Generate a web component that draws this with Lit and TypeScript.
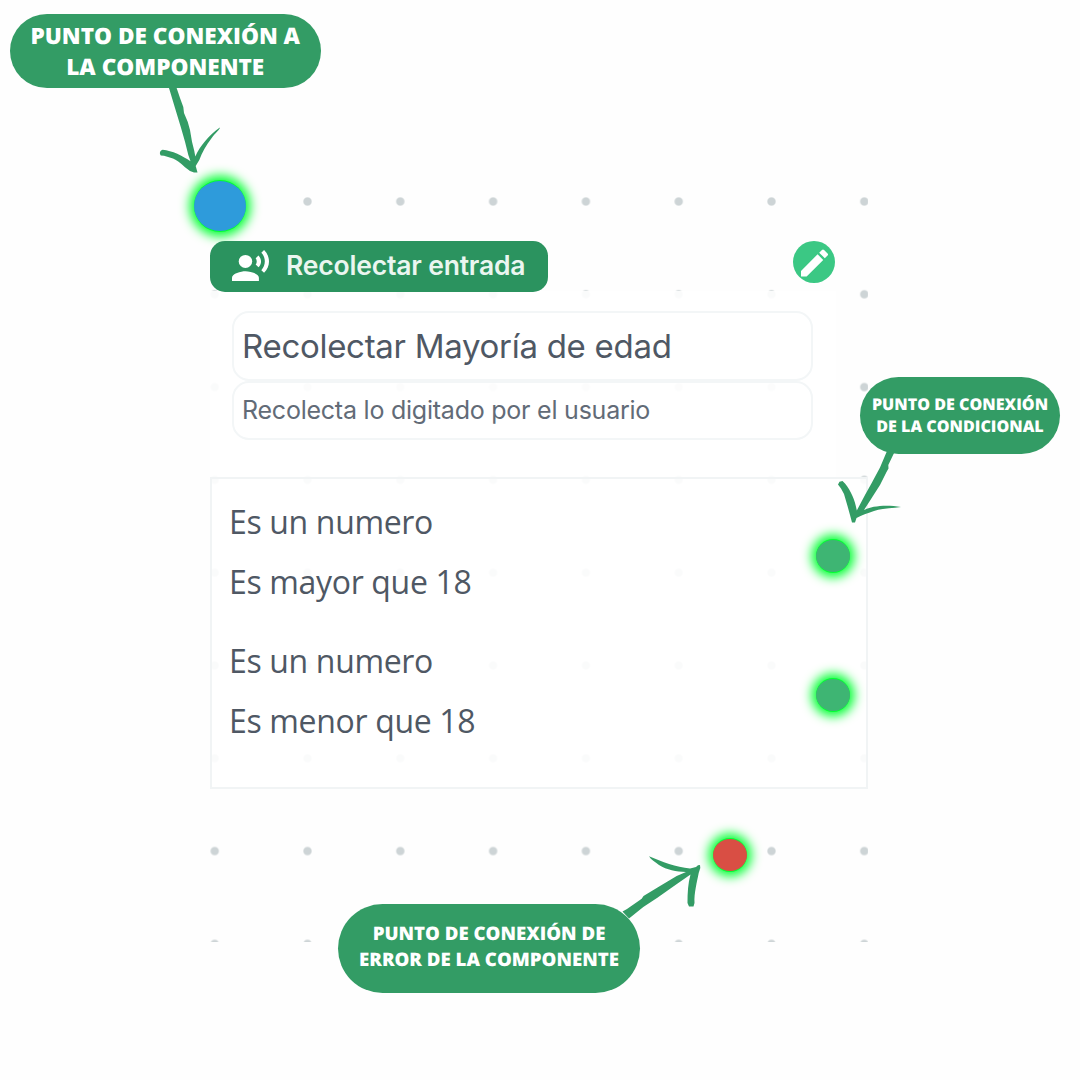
import { LitElement, html, css, svg } from "lit";
import { customElement, property } from "lit/decorators.js";

@customElement("flow-port")
class FlowPort extends LitElement {
  @property({ reflect: true }) kind = "condition";

  static styles = css`
    :host { display: block; position: relative; width: 34px; height: 32px; }
    .glow {
      position: absolute;
      left: 50%;
      top: 50%;
      width: 34px;
      height: 34px;
      margin: -17px 0 0 -17px;
      border-radius: 50%;
      background: #00ff32;
      box-shadow: 0 0 11px 4.5px #00ff32;
    }
    .core {
      position: absolute;
      inset: 0;
      border-radius: 50%;
      background: #3eb573;
    }
    :host([kind="error"]) .core { background: #d94e44; }
    :host([kind="input"]) { width: 52px; height: 50px; }
    :host([kind="input"]) .core { background: #2e9bdb; }
    :host([kind="input"]) .glow {
      width: 52px;
      height: 52px;
      margin: -26px 0 0 -26px;
    }
  `;

  render() {
    return html`<div class="glow"></div><div class="core"></div>`;
  }
}

@customElement("flow-node")
class FlowNode extends LitElement {
  static styles = css`
    :host { display: block; width: 658px; font-family: "Inter", "Liberation Sans", sans-serif; color: #4f5864; }
    .head { display: flex; justify-content: space-between; align-items: flex-start; height: 50px; padding-right: 33px; }
    .tag {
      display: flex;
      align-items: center;
      box-sizing: border-box;
      width: 338px;
      height: 51px;
      padding-left: 22px;
      gap: 17px;
      border-radius: 15px;
      background: #2b935f;
      color: #eaf6f0;
      font-size: 26.5px;
      font-weight: 600;
      line-height: 50px;
      letter-spacing: -0.18px;
      white-space: nowrap;
    }
    .voice { display: block; width: 37px; height: 31px; margin-top: -3px; fill: #fff; }
    .tag span { margin-top: -3px; }
    .edit {
      display: flex;
      align-items: center;
      justify-content: center;
      width: 42px;
      height: 42px;
      border-radius: 50%;
      background: #3bc884;
    }
    .pencil { display: block; width: 37px; height: 36px; margin-top: 2px; fill: #fff; }
    .info { box-sizing: border-box; width: 626px; height: 186px; padding: 20px 0 0 22px; background: rgba(255, 255, 255, 0.9); }
    .field {
      box-sizing: border-box;
      width: 581px;
      padding-left: 8px;
      border: 2px solid #f3f6f7;
      border-radius: 17px;
      background: rgba(255, 255, 255, 0.4);
      white-space: nowrap;
    }
    .title { height: 70px; background: #fff; font-size: 33px; line-height: 67px; letter-spacing: -0.29px; }
    .desc { height: 59px; font-size: 25px; line-height: 54.5px; letter-spacing: -0.23px; color: #626b77; }
    .rules {
      box-sizing: border-box;
      display: flex;
      flex-direction: column;
      gap: 19px;
      height: 312px;
      padding: 13px 16px 0 17px;
      border: 2px solid #f1f4f5;
      background: rgba(255, 255, 255, 0.9);
      font-family: "Open Sans", "Noto Sans", sans-serif;
      font-size: 32px;
      line-height: 60px;
      letter-spacing: -0.34px;
    }
    .rule { display: flex; justify-content: space-between; align-items: center; }
    .rule flow-port { margin-top: 7px; }
  `;

  private rules = [
    ["Es un numero", "Es mayor que 18"],
    ["Es un numero", "Es menor que 18"],
  ];

  render() {
    return html`
      <div class="head">
        <div class="tag">
          <svg class="voice" viewBox="1 2 22 19" preserveAspectRatio="none">
            <circle cx="9" cy="9" r="4" />
            <path d="M9 15c-2.67 0-8 1.34-8 4v2h16v-2c0-2.66-5.33-4-8-4zM16.76 5.36l-1.68 1.69c.84 1.18.84 2.71 0 3.89l1.68 1.69c2.02-2.02 2.02-5.07 0-7.27zM20.07 2l-1.63 1.63c2.77 3.02 2.77 7.56 0 10.74L20.07 16c3.9-3.89 3.91-9.95 0-14z" />
          </svg>
          <span>Recolectar entrada</span>
        </div>
        <div class="edit">
          <svg class="pencil" viewBox="0 0 24 24">
            <path d="M3 17.25V21h3.75L17.81 9.94l-3.75-3.75zM20.71 7.04a1 1 0 0 0 0-1.41l-2.34-2.34a1 1 0 0 0-1.41 0l-1.83 1.83 3.75 3.75z" />
          </svg>
        </div>
      </div>
      <div class="info">
        <div class="field title">Recolectar Mayoría de edad</div>
        <div class="field desc">Recolecta lo digitado por el usuario</div>
      </div>
      <div class="rules">
        ${this.rules.map(
          (lines) => html`<div class="rule">
            <div>${lines.map((l) => html`<div>${l}</div>`)}</div>
            <flow-port kind="condition"></flow-port>
          </div>`
        )}
      </div>
    `;
  }
}

@customElement("app-root")
class AppRoot extends LitElement {
  static styles = css`
    :host { display: block; position: relative; width: 1080px; height: 1080px; overflow: hidden; background: #fefefe; }
    .dots {
      position: absolute;
      left: 210px;
      top: 190px;
      width: 658px;
      height: 752px;
      background-image: radial-gradient(circle at center, #cdd4d6 3.5px, rgba(205, 212, 214, 0) 4.8px);
      background-size: 92.8px 92.8px;
      background-position: -41.7px -34.9px;
    }
    .node { position: absolute; left: 210px; top: 241px; }
    .in { position: absolute; left: 193.5px; top: 181px; }
    .err { position: absolute; left: 713px; top: 839px; }
    .arrows { position: absolute; inset: 0; width: 1080px; height: 1080px; fill: #339c65; }
    .note {
      position: absolute;
      display: flex;
      align-items: center;
      justify-content: center;
      box-sizing: border-box;
      background: #339c65;
      color: #fff;
      font-family: "Open Sans", "Noto Sans", sans-serif;
      font-weight: 800;
      text-align: center;
      text-rendering: geometricPrecision;
      white-space: nowrap;
    }
    .n-input { left: 10px; top: 13.5px; width: 310.5px; height: 74.5px; border-radius: 37.3px; font-size: 22.6px; line-height: 31px; }
    .n-cond { left: 860px; top: 376.5px; width: 200px; height: 77.5px; border-radius: 38.8px; font-size: 16.1px; line-height: 22px; }
    .n-error { left: 338px; top: 903.7px; width: 302px; height: 89px; padding-bottom: 2px; border-radius: 44.5px; font-size: 18.65px; line-height: 26px; }
  `;

  render() {
    return html`
      <div class="dots"></div>
      <flow-port class="in" kind="input"></flow-port>
      <flow-node class="node"></flow-node>
      <flow-port class="err" kind="error"></flow-port>
      <svg class="arrows" viewBox="0 0 1080 1080">
        ${svg`
          <path d="M168.700 87L176.300 87L180 98L183.300 107L184 113L187.700 121.700L190 130L192 141.700L194.300 151L195.300 156.500C200 146 209 135 219.800 127.500C220.500 129 215 133 211.700 138C206 145 202 153 199.300 160L195.700 166L197.500 172.500L194 172.500L190 171L185 167.300C180 162.500 176 159.800 173 158.500L164 155.800L160.800 155.500C158.800 153 160.500 150 162.700 149.700C172 150.500 183 156 190.500 161.300L188.300 155L185 141.700L180.700 126.700L175 108Z"/>
          <path d="M887 451L895 451L888.300 465L888.500 468.500L886.500 472L880 485L871.700 498L864 510C872 506 886 504.500 901 507C892 508.500 882 508 874 511C867 513.500 862 515 856.500 518L855 522.500L852 522.500L850 515L847.500 506L844 494L841 488.500L838 484.500L839.500 481.800L842.500 481L845 483.500C851 491 855 500 856.800 510.500L865 495L871.700 483L880 467.500Z"/>
          <path d="M622.500 911.500L629 918.500L643.300 907L657 898L674 886L690.500 874.500C688 883 687.500 893 687.500 903L689 906.500L693.500 906.500L694.500 903C694 893 697 882 698.700 873L700.300 868L700 865L698 865.200L696 867L690 868.500C676 867 662 862 649 856.300C651 860 655 862 659 865C667 870 676 871.800 686 872L676.700 876L660 886L643.500 896L641.700 898.800L627 909Z"/>
        `}
      </svg>
      <div class="note n-input"><div>PUNTO DE CONEXIÓN A<br />LA COMPONENTE</div></div>
      <div class="note n-cond"><div>PUNTO DE CONEXIÓN<br />DE LA CONDICIONAL</div></div>
      <div class="note n-error"><div>PUNTO DE CONEXIÓN DE<br />ERROR DE LA COMPONENTE</div></div>
    `;
  }
}
